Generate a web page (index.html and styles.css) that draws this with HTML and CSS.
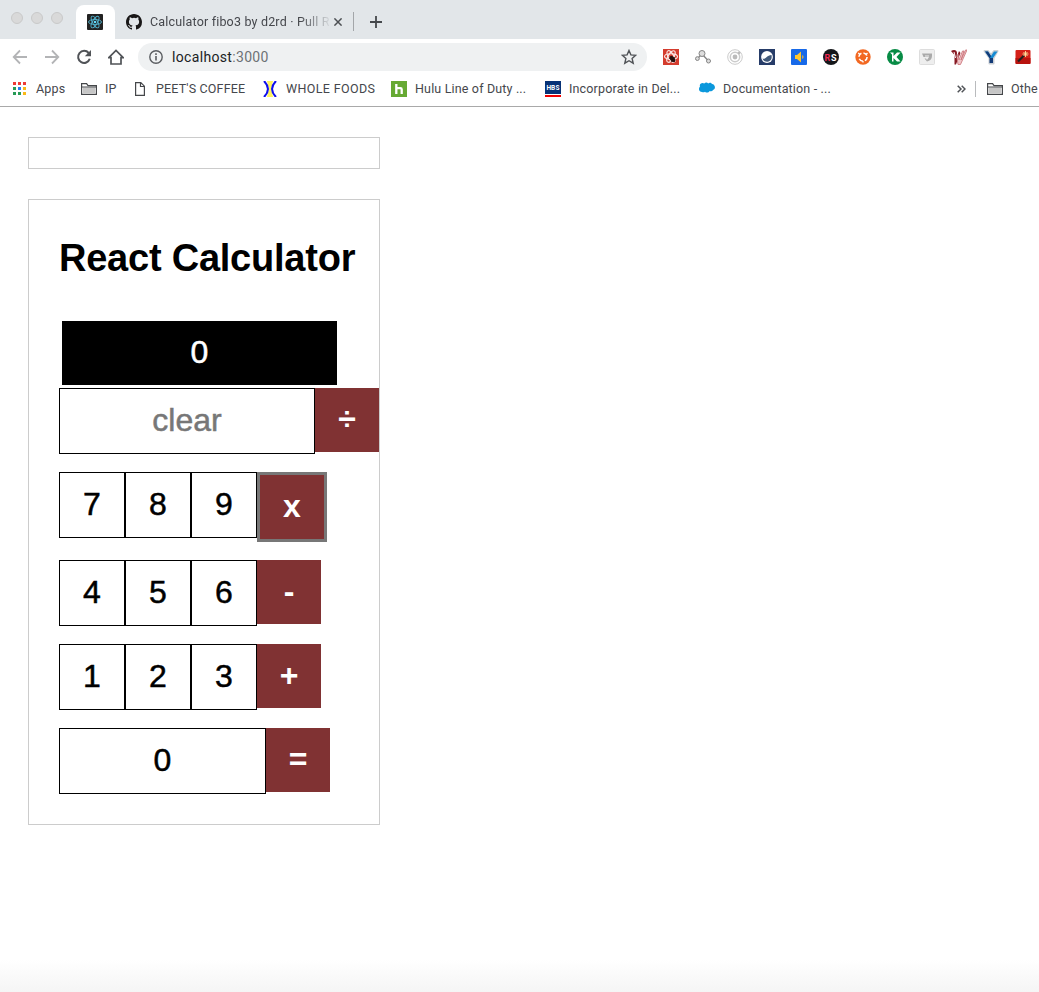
FILE: index.html
```html
<!DOCTYPE html>
<html lang="en">
<head>
<meta charset="utf-8">
<title>React Calculator</title>
<link rel="stylesheet" href="styles.css">
</head>
<body>
<header class="browser">
  <div class="tabstrip">
    <div class="lights"><i></i><i></i><i></i></div>
    <div class="tab-active">
      <svg width="16" height="16" viewBox="0 0 16 16"><rect width="16" height="16" rx="1" fill="#222"/><g fill="none" stroke="#53b5d0" stroke-width=".9"><ellipse cx="8" cy="8" rx="6.5" ry="2.5"/><ellipse cx="8" cy="8" rx="6.5" ry="2.5" transform="rotate(60 8 8)"/><ellipse cx="8" cy="8" rx="6.5" ry="2.5" transform="rotate(120 8 8)"/></g><circle cx="8" cy="8" r="1.3" fill="#61dafb"/></svg>
    </div>
    <div class="tab">
      <svg width="16" height="16" viewBox="0 0 16 16"><path fill="#191717" d="M8 0C3.58 0 0 3.58 0 8c0 3.54 2.29 6.53 5.47 7.59.4.07.55-.17.55-.38 0-.19-.01-.82-.01-1.49-2.01.37-2.53-.49-2.69-.94-.09-.23-.48-.94-.82-1.13-.28-.15-.68-.52-.01-.53.63-.01 1.08.58 1.23.82.72 1.21 1.87.87 2.33.66.07-.52.28-.87.51-1.07-1.78-.2-3.64-.89-3.64-3.95 0-.87.31-1.59.82-2.15-.08-.2-.36-1.02.08-2.12 0 0 .67-.21 2.2.82a7.6 7.6 0 0 1 4 0c1.53-1.04 2.2-.82 2.2-.82.44 1.1.16 1.92.08 2.12.51.56.82 1.27.82 2.15 0 3.07-1.87 3.75-3.65 3.95.29.25.54.73.54 1.48 0 1.07-.01 1.93-.01 2.2 0 .21.15.46.55.38A8 8 0 0 0 16 8c0-4.42-3.58-8-8-8z"/></svg>
      <span class="tab-title">Calculator fibo3 by d2rd · Pull R</span>
      <svg class="close" width="8" height="8" viewBox="0 0 8 8"><path d="M.4.4l7.2 7.2M7.6.4L.4 7.6" stroke="#4c4f53" stroke-width="1.5"/></svg>
    </div>
    <svg class="newtab" width="12" height="12" viewBox="0 0 12 12"><path d="M6 0v12M0 6h12" stroke="#45484c" stroke-width="1.8"/></svg>
  </div>
  <div class="toolbar">
    <div class="nav">
      <svg width="16" height="16" viewBox="0 0 16 16" fill="none" stroke="#b3b4b6" stroke-width="1.8"><path d="M15 8H2M8 1.5L1.7 8 8 14.5"/></svg>
      <svg width="16" height="16" viewBox="0 0 16 16" fill="none" stroke="#b3b4b6" stroke-width="1.8"><path d="M1 8h13M8 1.5L14.3 8 8 14.5"/></svg>
      <svg width="16" height="16" viewBox="0 0 16 16"><path d="M12.7 4A6 6 0 1 0 13.8 9.8" fill="none" stroke="#505357" stroke-width="2"/><path d="M15 1v6.2H8.8z" fill="#505357"/></svg>
      <svg width="16" height="16" viewBox="0 0 16 16"><path d="M.8 8.7L8 1.5l7.2 7.2H13V15H3V8.700z" fill="none" stroke="#505357" stroke-width="1.7"/></svg>
    </div>
    <div class="omnibox">
      <svg width="14" height="14" viewBox="0 0 14 14"><circle cx="7" cy="7" r="6.2" fill="none" stroke="#5a5d61" stroke-width="1.4"/><path d="M7 6v4.500M7 3.300v1.600" stroke="#5a5d61" stroke-width="1.6"/></svg>
      <span class="url">localhost<span class="port">:3000</span></span>
      <svg class="star" width="16" height="16" viewBox="0 0 16 16"><path d="M8 1.500l1.900 4.400 4.800.4-3.600 3.200 1.100 4.700L8 11.700l-4.200 2.500 1.100-4.700L1.300 6.300l4.800-.4z" fill="none" stroke="#505357" stroke-width="1.400"/></svg>
    </div>
    <div class="extensions">
      <svg width="16" height="16" viewBox="0 0 16 16"><rect width="16" height="16" fill="#d43c2e"/><g fill="none" stroke="#fbe9e7" stroke-width="1.100"><ellipse cx="8" cy="7.500" rx="6.500" ry="2.800"/><ellipse cx="8" cy="7.500" rx="6.500" ry="2.800" transform="rotate(60 8 7.500)"/><ellipse cx="8" cy="7.500" rx="6.500" ry="2.800" transform="rotate(120 8 7.500)"/></g><ellipse cx="9.500" cy="10" rx="2.200" ry="3.500" transform="rotate(-40 9.500 10)" fill="#25100e"/><path d="M6 9l6 4M8 13l4-5" stroke="#25100e" stroke-width=".8"/></svg>
      <svg width="16" height="16" viewBox="0 0 16 16"><path d="M2.500 9.500L7 5l6.500 7" fill="none" stroke="#858585" stroke-width="1.400"/><g fill="#ddd" stroke="#858585"><circle cx="7" cy="4.500" r="3"/><circle cx="2.400" cy="9.600" r="1.900"/><circle cx="13.500" cy="12" r="2"/></g></svg>
      <svg width="16" height="16" viewBox="0 0 16 16"><g fill="none" stroke="#cbcbcb"><circle cx="8" cy="8" r="7.300"/><circle cx="8" cy="8" r="4.700" stroke-width="1.500"/></g><circle cx="8" cy="8" r="2.400" fill="#bbb"/><circle cx="12" cy="4" r="1.400" fill="#bbb"/></svg>
      <svg width="16" height="16" viewBox="0 0 16 16"><rect width="16" height="16" fill="#263c68"/><circle cx="8" cy="8" r="5.900" fill="#fff"/><path d="M3.500 9.500c3 1.500 4-3.300 9-3.500 1 4.500-1.600 6.800-4.500 6.800-2 0-3.700-1-4.500-3.300z" fill="#405879"/></svg>
      <svg width="16" height="16" viewBox="0 0 16 16"><rect width="16" height="16" rx="1" fill="#1769e8"/><path d="M4 6h2l4-3.500v11L6 10H4z" fill="#ffc62e"/><path d="M11 6l1.500 1v2L11 10z" fill="#c6a94c"/></svg>
      <svg width="16" height="16" viewBox="0 0 16 16"><circle cx="8" cy="8" r="8" fill="#15171a"/><text x="1.500" y="12" class="rs" fill="#ee2851">R</text><text x="8" y="12" class="rs" fill="#fff">S</text></svg>
      <svg width="16" height="16" viewBox="0 0 16 16"><circle cx="8" cy="8" r="7.700" fill="#f26822"/><circle cx="8" cy="8" r="4.100" fill="none" stroke="#fff" stroke-width="1.600" stroke-dasharray="4.300 2.140"/><path d="M3.200 4l1.400 1M12.500 4l-1.300 1.200M8 12v1.600" stroke="#fff" stroke-width="1.300"/></svg>
      <svg width="16" height="16" viewBox="0 0 16 16"><circle cx="8" cy="8" r="8" fill="#078b45"/><path d="M3 3.500h3.500V7L10 3.500h3.500L9.500 8l4 4.500H10L6.500 9v3.500H5V5.500z" fill="#fff"/></svg>
      <svg width="16" height="16" viewBox="0 0 16 16"><rect x=".5" y=".5" width="15" height="15" rx="1" fill="#eee" stroke="#ddd"/><path d="M3 4.500h10v2.500c0 3-2 5-5 5.500L5.500 9.500H7L8 11l2-3H4.500z" fill="#aaa"/><path d="M6 6.500h4v1H6z" fill="#eee"/></svg>
      <svg width="16" height="16" viewBox="0 0 16 16"><path d="M0 2c3-2 6-1 6 2L5.500 9 8 2l1.500 2L5 15.500H3.500V6z" fill="#861923"/><path d="M3 3l1.500 6" stroke="#fff"/><path d="M7 5l1 6 3.500-9H13l-3 9 4.500-10H16L9.500 15.500H7L6 9" fill="#efc6c9" stroke="#c96d74" stroke-width=".8"/></svg>
      <svg width="16" height="16" viewBox="0 0 16 16"><path d="M1.500 2H5l3 4 3-4h3.500L10.500 9v5.500H6.500V9z" fill="#dce2e6" stroke="#c9ced3" stroke-width="2" stroke-linejoin="round"/><path d="M2 2.500h3L8 7l3-4.500h3.500L10 9H6.500z" fill="#168bd3"/><path d="M2 2.500h3l3 4.500-1 2h-.5zM6.500 9H10v5H6.500z" fill="#123a77"/></svg>
      <svg width="16" height="16" viewBox="0 0 16 16"><rect x=".5" y="1" width="15" height="14" rx="1" fill="#d52119"/><path d="M.5 9h15v5q0 1-1 1h-13q-1 0-1-1z" fill="#b8130e"/><path d="M3 12.500l6-6" stroke="#25201e" stroke-width="2.200"/><path d="M10.500 2v6M7.500 5h6M8.500 3l4 4M12.500 3l-4 4" stroke="#ffe3a0" stroke-width=".9"/></svg>
    </div>
  </div>
  <div class="bookmarks">
    <div class="bm bm-apps"><svg width="16" height="16" viewBox="0 0 16 16"><path d="M1 1h3v3H1zM6 1h3v3H6zM11 1h3v3h-3z" fill="#ee3b35"/><path d="M1 6h3v3H1zM1 11h3v3H1z" fill="#279b56"/><path d="M6 6h3v3H6z" fill="#247df1"/><path d="M6 11h3v3H6z" fill="#279b56"/><path d="M11 6h3v3h-3zM11 11h3v3h-3z" fill="#f9b918"/></svg><span>Apps</span></div>
    <div class="bm bm-ip"><svg width="16" height="16" viewBox="0 0 16 16"><path d="M.6 13.400V2.600h5l1.400 2h8.400v8.800z" fill="#fff" stroke="#45474a" stroke-width="1.200"/><path d="M1.800 6.500h12.400v5.800H1.800z" fill="#c6c6c6"/><path d="M1 6h14" stroke="#45474a"/></svg><span>IP</span></div>
    <div class="bm bm-peets"><svg width="16" height="16" viewBox="0 0 16 16"><path d="M3.600 1.600h5.200l3.600 3.600v9.200H3.600zM8.500 2v3.500h4" fill="#fff" stroke="#45474a" stroke-width="1.200"/></svg><span>PEET'S COFFEE</span></div>
    <div class="bm bm-whole"><svg width="16" height="16" viewBox="0 0 16 16"><path d="M5 0h6L9 8l2 8H5l2-8z" fill="#fff45d"/><path d="M2 0q8 8 0 16M14 0q-8 8 0 16" fill="none" stroke="#1010ec" stroke-width="2"/></svg><span>WHOLE FOODS</span></div>
    <div class="bm bm-hulu"><svg width="16" height="16" viewBox="0 0 16 16"><rect width="16" height="16" fill="#66a933"/><path d="M5.300 3v10M5.300 8.500q0-1.300 1.300-1.300h2.800q1.300 0 1.300 1.300V13" fill="none" stroke="#fff" stroke-width="2.300"/></svg><span>Hulu Line of Duty ...</span></div>
    <div class="bm bm-hbs"><svg width="16" height="16" viewBox="0 0 16 16"><path d="M0 0h16v13H0z" fill="#073276"/><path d="M0 14h16v2H0z" fill="#f00000"/><text class="hbs" x="8" y="9" text-anchor="middle" fill="#fff">HBS</text></svg><span>Incorporate in Del...</span></div>
    <div class="bm bm-docs"><svg width="16" height="16" viewBox="0 0 16 16"><path d="M3 11C0 11-1 7.500 1 5.500 0 3 3 1 5.300 2.500c1.200-1.500 3-1.200 3.900 0 1.300-1.300 3-.8 3.800.5 3.500.3 3.900 5.300 1 6-1 1.600-2.600 1.500-3.400 1.100-1 1.800-3.400 2-4.600.6C5 11.500 4 11.500 3 11z" fill="#0b98dc"/></svg><span>Documentation - ...</span></div>
    <div class="overflow">
      <svg width="9" height="8" viewBox="0 0 9 8"><path d="M.7.7L4 4 .7 7.300M4.700.7L8 4 4.700 7.300" fill="none" stroke="#505357" stroke-width="1.500"/></svg>
    </div>
    <div class="bm bm-other"><svg width="16" height="16" viewBox="0 0 16 16"><path d="M.6 13.400V2.600h5l1.400 2h8.400v8.800z" fill="#fff" stroke="#45474a" stroke-width="1.200"/><path d="M1.800 6.500h12.400v5.800H1.800z" fill="#c6c6c6"/><path d="M1 6h14" stroke="#45474a"/></svg><span>Othe</span></div>
  </div>
</header>
<main class="page">
  <section class="empty-box"></section>
  <section class="calculator">
    <h1>React Calculator</h1>
    <div class="display">0</div>
    <div class="row"><div class="key clear">clear</div><div class="op">÷</div></div>
    <div class="row row-focus"><div class="key">7</div><div class="key">8</div><div class="key">9</div><div class="op focused">x</div></div>
    <div class="row"><div class="key">4</div><div class="key">5</div><div class="key">6</div><div class="op">-</div></div>
    <div class="row"><div class="key">1</div><div class="key">2</div><div class="key">3</div><div class="op">+</div></div>
    <div class="row"><div class="key zero">0</div><div class="op">=</div></div>
  </section>
</main>
</body>
</html>
```
FILE: styles.css
```css
* { box-sizing: border-box; }
html, body { height: 100%; }
body {
  margin: 0;
  overflow: hidden;
  display: flex;
  flex-direction: column;
  font-family: "Liberation Sans", Arial, sans-serif;
  background: #fff;
}
svg { display: block; flex: none; }

.browser {
  flex: none;
  height: 107px;
  border-bottom: 1px solid #a9a9a9;
  font-family: Roboto, sans-serif;
  color: #45474c;
  white-space: nowrap;
  overflow: hidden;
}
.tabstrip { display: flex; height: 39px; background: #e2e6e9; }
.lights { display: flex; gap: 8px; width: 76px; padding: 12px 0 0 11px; }
.lights i { width: 12px; height: 12px; border-radius: 50%; background: #d9d9d9; border: 1px solid #c9c9c9; }
.tab-active { width: 39px; margin-top: 5px; padding: 9px 0 0 11px; background: #fff; border-radius: 8px 8px 0 0; }
.tab { display: flex; align-items: center; width: 239px; height: 19px; margin-top: 12px; padding-left: 11px; border-right: 1px solid #a3a6a9; }
.tab-title {
  width: 180px;
  margin-left: 8px;
  font-size: 12.5px;
  letter-spacing: .18px;
  -webkit-mask-image: linear-gradient(to right, #000 150px, transparent 182px);
  mask-image: linear-gradient(to right, #000 150px, transparent 182px);
}
.close { margin-left: 4px; }
.newtab { margin: 16px 0 0 16px; }

.toolbar { display: flex; align-items: center; height: 36px; padding-left: 12px; }
.nav { display: flex; gap: 16px; width: 126px; }
.omnibox { display: flex; align-items: center; width: 509px; height: 28px; border-radius: 14px; background: #eff1f2; padding: 0 10px 0 11px; }
.url { margin-left: 9px; font-size: 14px; letter-spacing: .33px; color: #202124; }
.port { color: #6d7175; }
.star { margin-left: auto; }
.extensions { display: flex; gap: 16px; margin-left: 16px; }
.rs { font: bold 9px Roboto, sans-serif; }
.hbs { font: bold 6.5px Roboto, sans-serif; }

.bookmarks { display: flex; align-items: center; height: 27px; padding-left: 12px; font-size: 12.5px; letter-spacing: .16px; }
.bm { display: flex; align-items: center; gap: 8px; flex: none; }
.bm-apps { width: 69px; }
.bm-ip { width: 51px; }
.bm-peets { width: 130px; }
.bm-whole { width: 129px; letter-spacing: .36px; }
.bm-hulu, .bm-hbs { width: 154px; }
.bm-docs { width: 258px; }
.overflow { display: flex; align-items: center; flex: none; width: 19px; height: 16px; border-right: 1px solid #b9bbbd; }
.bm-other { margin-left: 11px; }

.page {
  flex: 1;
  padding: 30px 28px;
  background: linear-gradient(to bottom, #fff calc(100% - 32px), #f5f5f5 100%);
}
.empty-box { width: 352px; height: 32px; border: 1px solid #ccc; }
.calculator { width: 352px; height: 626px; margin-top: 30px; padding: 0 30px; border: 1px solid #ccc; }
h1 { margin: 36px 0 41px; height: 44px; line-height: 44px; font-size: 38px; letter-spacing: -.23px; white-space: nowrap; }
.display { width: 275px; height: 64px; margin: 0 0 3px 3px; background: #000; color: #fff; font-size: 32px; line-height: 62px; text-align: center; -webkit-text-stroke: .5px #fff; }
.row { display: flex; align-items: flex-start; height: 66px; margin-bottom: 18px; }
.row-focus { height: 70px; }
.key { flex: none; width: 66px; height: 66px; border: 1px solid #000; font-size: 32px; line-height: 62px; text-align: center; color: #000; -webkit-text-stroke: .5px currentColor; }
.clear { width: 256px; color: #777; }
.zero { width: 207px; }
.op { flex: none; width: 64px; height: 64px; background: #803233; color: #fff; font-size: 32px; font-weight: bold; line-height: 62px; text-align: center; }
.focused { width: 70px; height: 70px; border: 3px solid #777; }
```
